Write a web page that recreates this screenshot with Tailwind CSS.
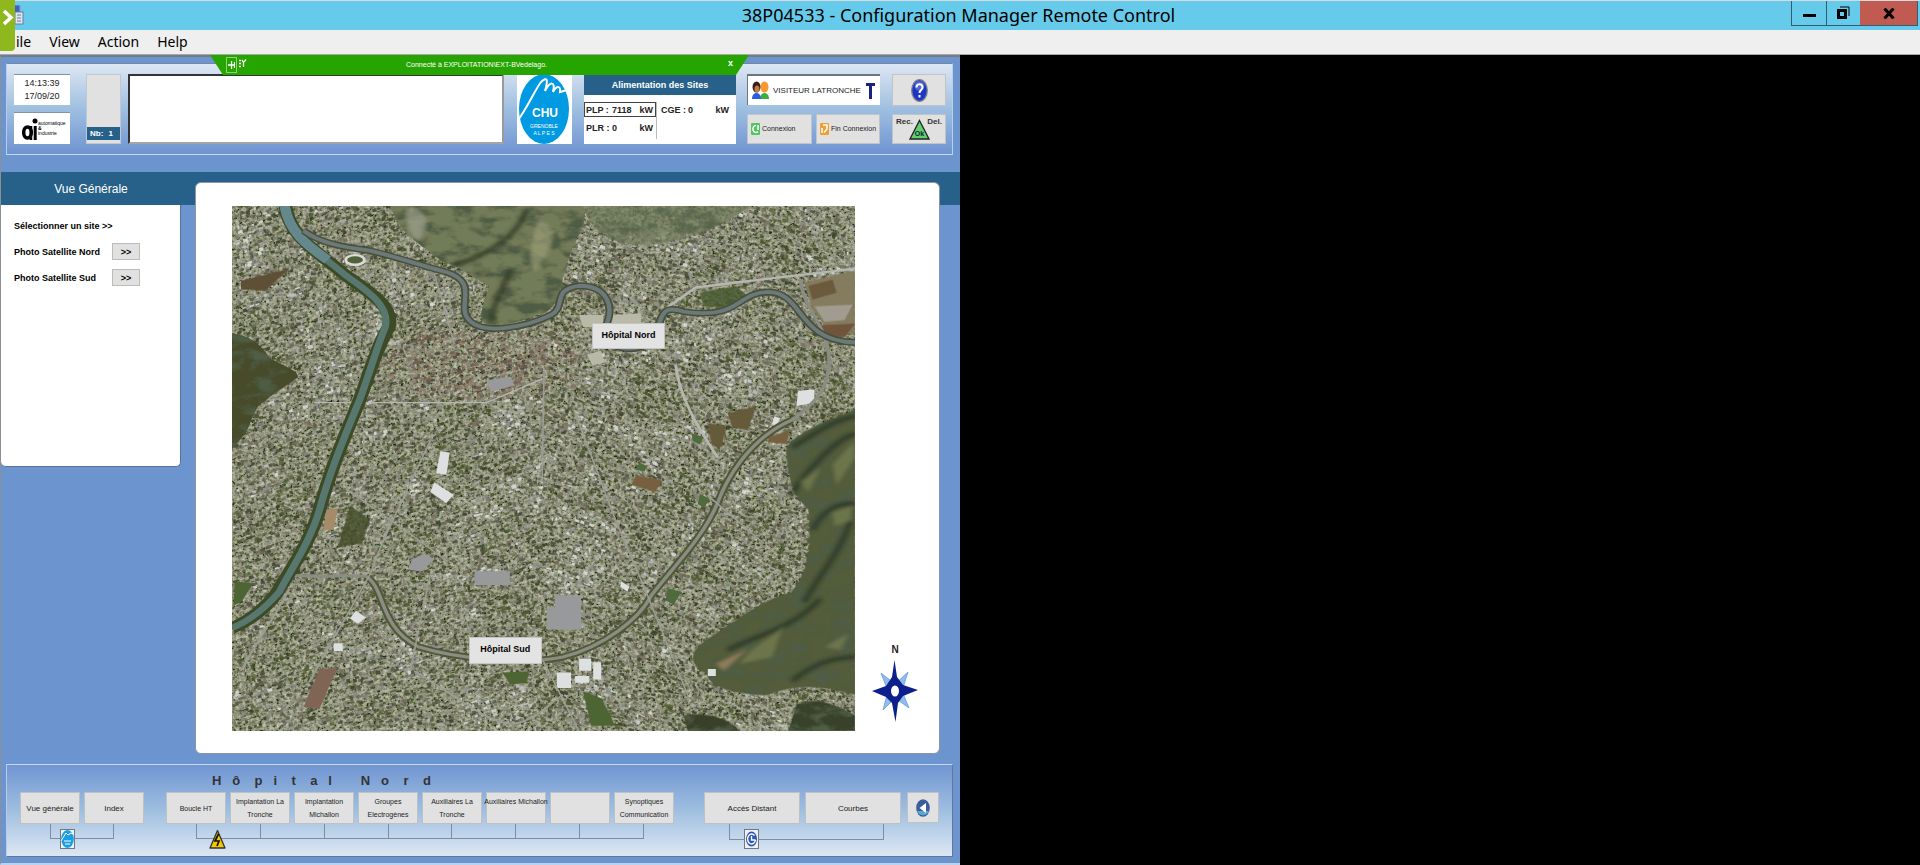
<!DOCTYPE html>
<html lang="fr">
<head>
    <meta charset="UTF-8">
    <meta name="viewport" content="width=device-width, initial-scale=1">
    <title>38P04533 - Configuration Manager Remote Control</title>
    <script src="https://cdn.jsdelivr.net/npm/@tailwindcss/browser@4"></script>
</head>
<body class="min-h-screen flex flex-col bg-black text-black font-['Liberation_Sans',sans-serif]">

    <!-- Title bar -->
    <header class="relative flex h-[30px] border-t border-[#d5dbde] bg-[#66cbea] font-['Noto_Sans','Open_Sans',sans-serif]">
        <svg class="absolute left-[12px] top-[4px] w-[12px] h-[20px]" viewBox="0 0 12 20">
            <rect x="1" y="0" width="7" height="13" fill="#3c62c8" stroke="#8c9cc0"/>
            <rect x="3" y="7" width="8" height="12" fill="#dfe6f2" stroke="#6c7896"/>
            <path d="M5 10h4M5 13h4M5 16h4" stroke="#6c7896"/>
        </svg>
        <h1 class="flex-1 text-center text-[18px] leading-[29px] pl-[126px]">38P04533 - Configuration Manager Remote Control</h1>
        <div class="flex h-[25px] mr-[2px] border border-t-0 border-[#2d5f70]">
            <button class="w-[35px] flex items-center justify-center border-r border-[#2d5f70]" aria-label="Minimize">
                <svg class="w-[13px] h-[12px]" viewBox="0 0 13 12"><path d="M0 8.500h13" stroke="#000" stroke-width="3"/></svg>
            </button>
            <button class="w-[33px] flex items-center justify-center" aria-label="Restore">
                <svg class="w-[13px] h-[14px]" viewBox="0 0 13 14" fill="none" stroke="#000"><rect x="1.500" y="4.500" width="7" height="7" stroke-width="3"/><path d="M3 1h9v9" stroke-width="1"/></svg>
            </button>
            <button class="w-[57px] flex items-center justify-center bg-[#c15a50]" aria-label="Close">
                <svg class="w-[12px] h-[11px]" viewBox="0 0 12 11"><path d="M1.500 0.500l9 10M10.500 0.500l-9 10" stroke="#000" stroke-width="3"/></svg>
            </button>
        </div>
        <button class="absolute z-20 left-0 top-[-1px] w-[15px] h-[51px] rounded-br-sm bg-[#8fb81e]" aria-label="Expand">
            <svg class="absolute left-[2px] top-[9px] w-[12px] h-[17px]" viewBox="0 0 12 17"><path d="M2 2l7 6.500l-7 6.500" fill="none" stroke="#fff" stroke-width="3.500"/></svg>
        </button>
    </header>

    <!-- Menu -->
    <nav class="flex h-[25px] items-center gap-[18px] pl-[16px] pb-[1px] bg-[#efefef] border-b border-[#a8a8a8] text-[14px] leading-[22px] font-['Noto_Sans','Open_Sans',sans-serif]">
        <button>ile</button>
        <button>View</button>
        <button>Action</button>
        <button>Help</button>
    </nav>

    <div class="flex-1 grid grid-cols-2">
        <div class="relative flex flex-col bg-[#6c95d0] border-l border-t-2 border-b-2 border-l-[#8a8f98] border-t-[#777c84] border-b-[#b9d3ee]">

            <!-- Connection banner -->
            <div class="absolute z-10 left-[209px] right-[211px] top-[-2px] h-[20px] flex items-center px-[16px] bg-[#26a500] text-white [clip-path:polygon(0_0,100%_0,calc(100%-13px)_100%,13px_100%)]">
                <button class="w-[11px] h-[16px] border border-[#8fd27c] flex items-center justify-center" aria-label="Pin">
                    <svg class="w-[7px] h-[10px]" viewBox="0 0 7 10" stroke="#fff" fill="none"><path d="M0 5h3M3.500 1v8M3 5h4M6.500 2v6" stroke-width="1.300"/></svg>
                </button>
                <svg class="ml-[2px] mb-[4px] w-[8px] h-[9px]" viewBox="0 0 8 9" stroke="#fff" fill="none"><path d="M0 1.500h2M0 4.500h2M0 7.500h2M3 1l1.500 2.500L7 0.500M4.500 3v5" stroke-width="1.300"/></svg>
                <p class="flex-1 text-center text-[7px] pr-[22px]">Connecté à EXPLOITATION\EXT-BVedelago.</p>
                <button class="text-[9px] leading-[14px] pb-[5px] font-bold">x</button>
            </div>

            <!-- Top panel -->
            <section class="flex h-[92px] mt-[6px] ml-[5px] mr-[7px] pt-[10px] pl-[7px] pr-[6px] border border-t-[#73889f] border-l-[#b9cdea] border-r-[#b9d0ee] border-b-[#c5daf2] bg-linear-to-b from-[#dde7f3] via-[#9fbfe0] to-[#6f93d1]">
                <div class="w-[56px] flex flex-col justify-between h-[70px] text-[9px] leading-[13px] text-center">
                    <div class="bg-white h-[31px] pt-[2px] border-t border-[#8292a8] text-[#222]">14:13:39<br>17/09/20</div>
                    <div class="bg-white h-[32px] border-t border-[#8292a8] flex items-center pl-[8px]">
                        <svg class="w-[16px] h-[24px] shrink-0" viewBox="0 0 16 24"><ellipse cx="5.500" cy="15.500" rx="3.800" ry="5.500" fill="none" stroke="#000" stroke-width="3.500"/><path d="M9 9v14" fill="none" stroke="#000" stroke-width="2.500"/><path d="M13.200 9v14" stroke="#000" stroke-width="3"/><circle cx="13" cy="4" r="2.500"/></svg>
                        <p class="text-[5px] leading-[5px] text-left">automatique<br><b>&amp;</b><br>industrie</p>
                    </div>
                </div>
                <div class="ml-[16px] w-[35px] h-[70px] pb-[3px] flex flex-col justify-end bg-[#e1e1e1] border border-[#c2c8d0]">
                    <div class="h-[13px] flex justify-between px-[3px] pr-[7px] bg-[#27618a] text-white text-[8px] leading-[13px] font-bold"><span>Nb:</span><span>1</span></div>
                </div>
                <textarea class="ml-[7px] flex-1 min-w-0 h-[70px] bg-white border-2 border-t-[#333] border-l-[#333] border-r-[#9a9a9a] border-b-[#a5a5a5] resize-none" aria-label="Messages"></textarea>
                <svg class="ml-[13px] w-[55px] h-[70px] bg-white" viewBox="0 0 55 70">
                    <ellipse cx="27" cy="35" rx="25" ry="35" fill="#009ae3"/>
                    <path d="M1 46C10 34 18 16 24 8C31 2 31 6 28 17C33 7 39 7 36 18C40 11 44 12 43 18C46 17 50 17 54 14" fill="none" stroke="#fff" stroke-width="2"/>
                    <text x="28" y="43" text-anchor="middle" font-size="12" font-weight="bold" fill="#fff" font-family="Liberation Sans, sans-serif">CHU</text>
                    <text x="27" y="54" text-anchor="middle" font-size="5" fill="#fff" font-family="Liberation Sans, sans-serif">GRENOBLE</text>
                    <text x="27" y="61" text-anchor="middle" font-size="5" fill="#fff" font-family="Liberation Sans, sans-serif">A L P E S</text>
                </svg>
                <table class="ml-[12px] w-[152px] h-[70px] table-fixed bg-white border-separate border-spacing-0 text-[9px] leading-[12px] font-bold text-[#222]">
                    <colgroup><col class="w-[27px]"><col class="w-[24px]"><col class="w-[21px]"><col class="w-[31px]"><col class="w-[20px]"><col class="w-[29px]"></colgroup>
                    <tr class="h-[21px]"><th colspan="6" class="bg-[#27618a] text-white text-center">Alimentation des Sites</th></tr>
                    <tr class="h-[7px]"><td colspan="6"></td></tr>
                    <tr class="h-[15px]">
                        <td class="border border-r-0 border-[#444] pl-px">PLP :</td><td class="border-y border-[#444] pl-[1px]">7118</td><td class="border border-l-0 border-[#444] text-right pr-[2px]">kW</td>
                        <td class="border-l border-[#bbb] pl-[4px]">CGE :</td><td class="pl-[1px]">0</td><td class="text-right pr-[7px]">kW</td>
                    </tr>
                    <tr class="h-[22px]">
                        <td class="pl-[2px]">PLR :</td><td class="pl-[1px]">0</td><td class="text-right pr-[3px]">kW</td>
                        <td class="border-l border-[#bbb]"></td><td></td><td></td>
                    </tr>
                    <tr><td colspan="6"></td></tr>
                </table>
                <div class="ml-[11px] w-[133px] h-[70px] flex flex-col justify-between">
                    <div class="flex items-center h-[31px] bg-white border-t-2 border-l border-[#6d7682] pl-[4px] pr-[5px]">
                        <svg class="w-[17px] h-[19px]" viewBox="0 0 17 19">
                            <path d="M8 18c0-8 9-8 9 0z" fill="#3fae3c"/><path d="M0 18c0-8 9-8 9 0z" fill="#2a5be0"/>
                            <ellipse cx="12.500" cy="6" rx="4" ry="5.500" fill="#f59a2c"/><ellipse cx="4.500" cy="6" rx="4" ry="5.500" fill="#3b2017"/><ellipse cx="5" cy="8" rx="2.500" ry="3.500" fill="#c47a45"/>
                        </svg>
                        <span class="flex-1 pl-[4px] text-[8px] whitespace-nowrap text-[#222]">VISITEUR LATRONCHE</span>
                        <svg class="w-[9px] h-[16px]" viewBox="0 0 9 16"><path d="M0 1.500h9M4.500 1v15" stroke="#1c2180" stroke-width="3"/></svg>
                    </div>
                    <div class="flex justify-between text-[7px] text-[#222]">
                        <button class="w-[65px] h-[30px] flex items-center gap-[2px] pl-[3px] bg-[#e1e1e1] border border-[#c0c4c8]">
                            <svg class="w-[9px] h-[12px] shrink-0" viewBox="0 0 9 12"><rect width="9" height="12" rx="1" fill="#4fc45f"/><path d="M7 2v5M5 2.500a3 3.500 0 1 0 2 6" fill="none" stroke="#fff" stroke-width="1.500"/></svg>
                            Connexion
                        </button>
                        <button class="w-[64px] h-[30px] flex items-center gap-[2px] pl-[3px] whitespace-nowrap bg-[#e1e1e1] border border-[#c0c4c8]">
                            <svg class="w-[9px] h-[12px] shrink-0" viewBox="0 0 9 12"><rect width="9" height="12" rx="1" fill="#f0a030"/><path d="M3 2h4v4L4 9.500M2 5v5" fill="none" stroke="#fff" stroke-width="1.500"/></svg>
                            Fin Connexion
                        </button>
                    </div>
                </div>
                <div class="ml-[12px] w-[54px] h-[70px] flex flex-col justify-between">
                    <button class="h-[32px] flex items-center justify-center bg-[#e1e1e1] border border-[#c0c4c8]" aria-label="Aide">
                        <svg class="w-[17px] h-[23px]" viewBox="0 0 17 23"><ellipse cx="8.500" cy="11.500" rx="7.800" ry="10.800" fill="#1c35c4" stroke="#7d8390" stroke-width="1.300"/><ellipse cx="8.500" cy="7" rx="5" ry="5" fill="#6f86e6" opacity=".6"/><path d="M5.500 8.500C5.500 4 11.500 4 11.500 8.500C11.500 11 8.500 11 8.500 14M8.500 16v2.500" fill="none" stroke="#fff" stroke-width="2"/></svg>
                    </button>
                    <button class="relative h-[30px] flex justify-between px-[3px] pt-[1px] bg-[#e1e1e1] border border-[#c0c4c8] text-[8px] leading-[12px] font-bold text-[#333]">
                        <span>Rec.</span><span>Del.</span>
                        <svg class="absolute left-[16px] top-[4px] w-[21px] h-[21px]" viewBox="0 0 21 21"><path d="M10.500 1.500L20 20H1z" fill="#5fcf6f" stroke="#222" stroke-width="1.300"/><text x="10.500" y="17" text-anchor="middle" font-size="7" font-family="Liberation Sans, sans-serif" fill="#123">Ok</text></svg>
                    </button>
                </div>
            </section>

            <!-- Main area -->
            <main class="flex-1 mt-[17px] flex bg-[linear-gradient(#27618a_33px,transparent_33px)]">
                <aside class="w-[180px]">
                    <h2 class="h-[33px] text-center text-white text-[12px] leading-[34px]">Vue Générale</h2>
                    <div class="h-[262px] px-[13px] pt-[13px] bg-white border-r border-b border-[#56719b] rounded-b-[5px] text-[9px] leading-[16px] font-bold">
                        <p>Sélectionner un site &gt;&gt;</p>
                        <div class="mt-[9px] flex items-center">
                            <span class="w-[98px]">Photo Satellite Nord</span>
                            <button class="w-[28px] h-[17px] bg-[#e1e1e1] border border-[#bcbcbc] leading-[14px]">&gt;&gt;</button>
                        </div>
                        <div class="mt-[9px] flex items-center">
                            <span class="w-[98px]">Photo Satellite Sud</span>
                            <button class="w-[28px] h-[17px] bg-[#e1e1e1] border border-[#bcbcbc] leading-[14px]">&gt;&gt;</button>
                        </div>
                    </div>
                </aside>
                <div class="flex-1 mt-[10px] mb-[10px] ml-[14px] mr-[20px] pt-[23px] pb-[22px] pl-[36px] flex bg-white border border-[#8b95a5] rounded-[6px]">
                    <div class="relative flex-1">
                        <svg id="map" class="absolute inset-0 w-full h-full" viewBox="7 18 1549 1527" preserveAspectRatio="none">
                            <defs>
                                <filter id="grain" x="0" y="0" width="100%" height="100%">
                                    <feTurbulence type="fractalNoise" baseFrequency="0.12" numOctaves="4" seed="4"/>
                                    <feColorMatrix values="1.700 0 0 0 -.42  1.600 .1 0 0 -.4  1.500 0 .1 0 -.47  0 0 0 0 1"/>
                                </filter>
                                <filter id="relief" x="0" y="0" width="100%" height="100%">
                                    <feTurbulence type="fractalNoise" baseFrequency="0.018 0.03" numOctaves="4" seed="9" result="n"/>
                                    <feColorMatrix values="0 0 0 0 .08  0 0 0 0 .11  0 0 0 0 .06  4 0 0 0 -1.800"/>
                                    <feComposite in2="SourceGraphic" operator="in" result="s"/>
                                    <feMerge><feMergeNode in="SourceGraphic"/><feMergeNode in="s"/></feMerge>
                                </filter>
                                <filter id="soft"><feGaussianBlur stdDeviation="5"/></filter>
                            </defs>
                            <rect x="7" y="18" width="1549" height="1527" fill="#65664f"/>
                            <rect x="7" y="18" width="1549" height="1527" filter="url(#grain)" opacity=".6"/>
                            <g id="blocks"></g>
                            <!-- hills -->
                            <g filter="url(#relief)">
                                <path d="M7 388C50 395 80 420 100 460C130 480 170 495 172 515C140 545 110 560 90 585C60 600 60 640 40 680L7 725Z" fill="#464b2b"/>
                                <path d="M400 18H880C900 60 850 130 840 190C820 240 830 290 790 325C740 345 700 370 640 362C610 350 640 290 645 250C590 215 570 190 530 180C480 130 430 110 400 18Z" fill="#737b58"/>
                                <path d="M880 18H1300C1240 60 1180 110 1060 130C960 140 900 100 880 18Z" fill="#717c5b" opacity=".7"/>
                                <path d="M1556 610V1440C1500 1420 1420 1400 1340 1440C1270 1440 1190 1420 1190 1380C1140 1350 1140 1310 1200 1270C1270 1220 1310 1170 1400 1140C1440 1080 1450 1000 1440 900C1390 850 1390 790 1385 720C1430 660 1500 640 1556 610Z" fill="#525b3b"/>
                                <path d="M1390 1545L1410 1470C1460 1440 1510 1470 1556 1500V1545Z" fill="#39422c"/>
                                <path d="M1130 1500C1180 1490 1230 1500 1270 1545H1140Z" fill="#37402a"/>
                            </g>
                            <g filter="url(#soft)">
                                <path d="M740 30C720 90 670 150 560 190M650 350C660 290 690 240 700 200" stroke="#2d3724" stroke-width="16" fill="none" opacity=".7"/>
                                <path d="M770 60C830 80 800 150 760 210C740 180 750 120 770 60Z" fill="#a1a37c" opacity=".6"/>
                                <path d="M450 20C500 30 500 90 470 120C440 90 430 50 450 20Z" fill="#a3a695" opacity=".6"/>
                                <path d="M1395 860C1430 800 1500 700 1556 680M1450 960C1480 890 1530 880 1556 885M1430 1170C1460 1100 1540 1000 1550 900M1240 1310C1300 1270 1400 1250 1470 1160M1400 1400C1450 1350 1500 1330 1556 1330M1400 720C1440 690 1500 640 1556 630" stroke="#1f2c1e" stroke-width="15" fill="none" opacity=".6"/>
                                <path d="M1500 770L1556 700V750L1510 830ZM1500 910L1550 890V930L1505 950ZM1270 1350C1300 1290 1370 1270 1380 1230L1350 1330ZM1480 1300L1540 1260L1520 1310ZM1420 820L1470 780L1440 850Z" fill="#737c50" opacity=".8"/>
                                <path d="M1210 1350L1290 1305L1230 1370Z" fill="#8f7b5c"/>
                            </g>
                            <!-- fields -->
                            <path d="M1430 240L1556 205V390L1500 395L1450 320Z" fill="#857b5e"/>
                            <path d="M1440 250L1500 232L1510 270L1450 290Z" fill="#6b5a3c"/>
                            <path d="M1455 310L1550 305L1530 350L1480 355Z" fill="#a09c8f"/>
                            <path d="M1465 365L1556 360L1530 400L1490 398Z" fill="#70553a"/>
                            <path d="M1340 690L1395 670L1385 710L1340 705ZM1010 800L1075 815L1060 850L1000 830Z" fill="#766040"/>
                            <path d="M1240 620L1310 600L1290 670L1250 660ZM1190 650L1235 655L1225 720L1200 715Z" fill="#655a3a"/>
                            <path d="M30 235L150 200L90 265L30 260Z" fill="#5e4f36"/>
                            <path d="M300 890L350 930L330 1000L270 1010Z" fill="#414b27" opacity=".8"/>
                            <path d="M240 900h30l-10 60h-25z" fill="#a58b68"/>
                            <path d="M225 1365L268 1362L225 1480L185 1475Z" fill="#806555"/>
                            <path d="M1170 270L1260 250L1300 290L1250 315L1180 310Z" fill="#465a30" opacity=".8"/>
                            <path d="M1090 1130L1125 1140L1105 1178L1085 1165ZM1150 680L1180 690L1170 712L1152 700ZM1020 765L1040 775L1032 790L1012 785ZM1170 855L1195 870L1180 895L1165 885Z" fill="#4f6a3c"/>
                            <path d="M880 1430L925 1450L960 1530L900 1530ZM680 1375L745 1372L740 1405L700 1410ZM15 1110L60 1115L30 1170L10 1180Z" fill="#4d6433"/>
                            <!-- big roofs -->
                            <g fill="#dde0e0">
                                <path d="M510 822L558 858L540 882L500 850ZM525 732L548 735L540 800L515 795ZM1415 555L1455 552L1455 590L1410 600ZM1355 630L1370 635L1360 658L1350 652Z"/>
                                <path d="M870 1335h30v35h-30zM815 1375h35v45h-35zM905 1345h20v50h-20zM860 1385h35v20h-35zM1190 1365h20v20h-20zM975 1110l20 15l-5 15l-18-15zM315 1195l25 20l-20 18l-20-15zM260 1290h22v22h-22z"/>
                            </g>
                            <path d="M455 1045L485 1030L510 1045L480 1080L445 1075ZM790 1185h85v65h-85zM810 1150h65v35h-65zM610 1080h88v40h-88zM640 525l60-10l10 25l-60 18z" fill="#98999b"/>
                            <path d="M890 450l35-12l8 35l-30 8zM870 335h60v35h-50zM950 335l75-5v30h-75z" fill="#b9b9a8"/>
                            <ellipse cx="313" cy="175" rx="23" ry="14" fill="#53613a" stroke="#d9ddd8" stroke-width="7"/>
                            <!-- roads -->
                            <g fill="none" stroke="#9c9d95" stroke-width="6">
                                <path d="M340 1095C390 1130 370 1240 470 1300C580 1340 750 1350 830 1330C930 1300 1020 1220 1050 1150C1110 1060 1180 980 1215 880C1240 800 1300 690 1400 640" stroke="#4f5838" stroke-width="20"/>
                                <path d="M130 1090C200 1100 300 1090 340 1095C390 1130 370 1240 470 1300C580 1340 750 1350 830 1330C930 1300 1020 1220 1050 1150C1110 1060 1180 980 1215 880C1240 800 1300 690 1400 640C1460 590 1500 540 1490 440C1480 360 1420 300 1422 230" stroke="#8b8c82" stroke-width="9"/>
                                <path d="M1110 480C1120 580 1170 670 1215 750M1080 320L1160 255L1300 235L1556 200" stroke="#b5b7b0" stroke-width="7"/>
                                <path d="M210 590H640L780 520" stroke="#b5b7b0" stroke-width="4"/>
                                <path d="M783 490L778 820M290 840L460 980L540 1050M860 620L960 930L1040 1150L1140 1440M400 940L350 1090L200 1400M500 1090L450 1370M780 1340L870 1545M510 215L560 420M1190 860L1330 1000M500 700L380 1000" stroke-width="4"/>
                                <path d="M460 1370C560 1440 640 1520 700 1525C760 1520 800 1460 830 1440M30 1370C60 1300 110 1220 150 1130" stroke-width="5"/>
                            </g>
                            <!-- rivers -->
                            <g fill="none" stroke-linejoin="round">
                                <path d="M140 18C150 110 220 150 290 220C350 270 410 310 397 370C370 420 350 500 325 580C290 680 250 790 225 900C200 1000 150 1080 115 1150C80 1200 40 1230 7 1245" stroke="#3d4a26" stroke-width="34"/>
                                <path d="M140 18C150 110 220 150 290 220C350 270 400 310 388 370C370 420 350 500 325 580C290 680 250 790 225 900C200 1000 150 1080 125 1140C80 1200 40 1230 7 1245" stroke="#58776e" stroke-width="18"/>
                                <path d="M138 18C148 90 190 130 245 175" stroke="#65888c" stroke-width="26"/>
                                <path id="isere" d="M185 90C230 130 300 140 350 148C430 170 500 200 540 210C620 240 570 300 590 340C620 400 740 370 800 335C840 310 800 260 870 250C940 250 960 310 935 370C930 450 1040 450 1060 390C1080 320 1080 310 1130 325C1270 350 1260 270 1340 268C1430 270 1410 410 1556 415" stroke="#46503c" stroke-width="20"/>
                                <path d="M185 90C230 130 300 140 350 148C430 170 500 200 540 210C620 240 570 300 590 340C620 400 740 370 800 335C840 310 800 260 870 250C940 250 960 310 935 370C930 450 1040 450 1060 390C1080 320 1080 310 1130 325C1270 350 1260 270 1340 268C1430 270 1410 410 1556 415" stroke="#6d7978" stroke-width="11"/>
                            </g>
                        </svg>
                        <button class="absolute left-[57.800%] top-[22.300%] w-[73px] h-[26px] bg-[#e3e3e3] border border-[#c4c4c4] text-[9px] font-bold">Hôpital Nord</button>
                        <button class="absolute left-[38%] top-[82%] w-[73px] h-[27px] bg-[#e3e3e3] border border-[#c4c4c4] text-[9px] font-bold">Hôpital Sud</button>
                    </div>
                    <div class="w-[84px] self-end flex flex-col items-center pb-[9px] pr-[4px]">
                        <span class="text-[10px] leading-[14px] font-bold text-[#222]">N</span>
                        <svg class="mt-[3px] w-[46px] h-[62px]" viewBox="0 0 46 62">
                            <path d="M9 13L23 24L36 12L30 31L37 48L23 38L11 50L16 31Z" fill="#8fbdf0" stroke="#5f8fce" stroke-width=".7"/>
                            <path d="M22.500 0L25 17L31 25L46 30L31 36L26 43L23.500 62L20 43L14 37L0 31L14 26L20 17Z" fill="#0c1f8c"/>
                            <ellipse cx="23" cy="31" rx="4" ry="5.500" fill="#fff"/>
                        </svg>
                    </div>
                </div>
            </main>

            <!-- Bottom navigation -->
            <nav class="relative flex h-[93px] ml-[5px] mr-[7px] mb-[6px] pl-[13px] pr-[13px] pt-[27px] border border-t-[#c5daf2] border-l-[#b9cdea] border-r-[#60789c] border-b-[#60789c] bg-linear-to-b from-[#7195d2] via-[#9fbfe0] to-[#dde7f3] text-[8px] leading-[13px] text-[#222]">
                <div class="relative w-[124px]">
                    <div class="grid grid-cols-2 gap-[4px]">
                        <button class="h-[32px] bg-[#e1e1e1] border border-[#bdc1c6]">Vue générale</button>
                        <button class="h-[32px] bg-[#e1e1e1] border border-[#bdc1c6]">Index</button>
                    </div>
                    <div class="h-[15px] mx-[30px] border border-t-0 border-[#7f8da3]"></div>
                    <svg class="absolute left-[40px] top-[37px] w-[15px] h-[20px]" viewBox="0 0 15 20"><rect x=".5" y=".5" width="14" height="19" fill="#e8f4fc" stroke="#777"/><ellipse cx="7.500" cy="10" rx="6.300" ry="9" fill="#1a9fe4"/><path d="M1 12L6 4L8 6L11 4L13 5M4 12h7M5 15h5" stroke="#fff" fill="none"/></svg>
                </div>
                <div class="relative ml-[22px] flex-1">
                    <h3 class="absolute left-[46px] bottom-[67px] whitespace-pre text-[13px] leading-[16px] font-bold text-[#333]">H   ô    p   i    t    a   l        N   o    r    d</h3>
                    <div class="grid grid-cols-8 gap-[4px] whitespace-nowrap text-[7px]">
                        <button class="h-[32px] bg-[#e1e1e1] border border-[#bdc1c6]">Boucle HT</button>
                        <button class="h-[32px] bg-[#e1e1e1] border border-[#bdc1c6]">Implantation La<br>Tronche</button>
                        <button class="h-[32px] bg-[#e1e1e1] border border-[#bdc1c6]">Implantation<br>Michallon</button>
                        <button class="h-[32px] bg-[#e1e1e1] border border-[#bdc1c6]">Groupes<br>Electrogènes</button>
                        <button class="h-[32px] bg-[#e1e1e1] border border-[#bdc1c6]">Auxiliaires La<br>Tronche</button>
                        <button class="h-[32px] pb-[13px] flex justify-center items-center bg-[#e1e1e1] border border-[#bdc1c6]">Auxiliaires Michallon</button>
                        <button class="h-[32px] bg-[#e1e1e1] border border-[#bdc1c6]" aria-label="Libre"></button>
                        <button class="h-[32px] bg-[#e1e1e1] border border-[#bdc1c6]">Synoptiques<br>Communication</button>
                    </div>
                    <div class="grid grid-cols-7 h-[15px] mx-[30px] border border-t-0 border-l-0 border-[#7f8da3]">
                        <i class="border-l border-[#7f8da3]"></i><i class="border-l border-[#7f8da3]"></i><i class="border-l border-[#7f8da3]"></i><i class="border-l border-[#7f8da3]"></i><i class="border-l border-[#7f8da3]"></i><i class="border-l border-[#7f8da3]"></i><i class="border-l border-[#7f8da3]"></i>
                    </div>
                    <svg class="absolute left-[43px] top-[37px] w-[17px] h-[20px]" viewBox="0 0 17 20"><path d="M8.500 1.500L16 19H1Z" fill="#f7c600" stroke="#333" stroke-width="1.300" stroke-linejoin="round"/><path d="M9.500 5L6 12h4l-2 5" fill="none" stroke="#111" stroke-width="1.700"/></svg>
                </div>
                <div class="relative ml-[30px] w-[197px]">
                    <div class="grid grid-cols-2 gap-[5px]">
                        <button class="h-[32px] bg-[#e1e1e1] border border-[#bdc1c6]">Accès Distant</button>
                        <button class="h-[32px] bg-[#e1e1e1] border border-[#bdc1c6]">Courbes</button>
                    </div>
                    <div class="h-[16px] ml-[25px] mr-[17px] border border-t-0 border-[#7f8da3]"></div>
                    <svg class="absolute left-[40px] top-[37px] w-[15px] h-[20px]" viewBox="0 0 15 20"><rect x=".5" y=".5" width="14" height="19" fill="#eef1f6" stroke="#777"/><ellipse cx="7.500" cy="10" rx="5.500" ry="7.500" fill="#2d55b8"/><path d="M10.500 6.500A4 5 0 1 0 11.500 11M7.500 7v4h4" stroke="#fff" fill="none" stroke-width="1.400"/></svg>
                </div>
                <button class="ml-[6px] w-[32px] h-[31px] flex items-center justify-center bg-[#e1e1e1] border border-[#bdc1c6]" aria-label="Retour">
                    <svg class="w-[14px] h-[18px]" viewBox="0 0 14 18"><ellipse cx="7" cy="9" rx="6.800" ry="8.800" fill="#3c5c9c"/><path d="M1 12a6.500 7 0 0 0 12 0z" fill="#5aa6cf"/><path d="M10 4v10L3.500 9z" fill="#fff"/></svg>
                </button>
            </nav>
        </div>
        <div class="bg-black"></div>
    </div>

    <script>
        // Scatter buildings and trees over the town
        let seed = 7;
        function rand() {
            seed = (seed * 16807) % 2147483647;
            return seed / 2147483647;
        }

        // Coarse value noise, so parks and built-up blocks form clusters
        const grid = Array.from({ length: 1600 }, rand);
        function noise(x, y, size) {
            const gx = Math.floor(x / size), gy = Math.floor(y / size);
            const fx = x / size - gx, fy = y / size - gy;
            const at = (i, j) => grid[((i % 40) + (j % 40) * 40)];
            return (at(gx, gy) * (1 - fx) + at(gx + 1, gy) * fx) * (1 - fy)
                + (at(gx, gy + 1) * (1 - fx) + at(gx + 1, gy + 1) * fx) * fy;
        }

        const green = ["#3e4727", "#4c5a2f", "#56613c", "#5e6440", "#333c24", "#6d6d50", "#8b8c84"];
        const town = ["#4a4d3a", "#5d5b4c", "#7a7868", "#8b8c84", "#a6a7a3", "#746c5a", "#3e4330"];
        const works = ["#a6a7a3", "#c3c5c3", "#e0e2e2", "#8e9090", "#6f7068", "#565a45"];
        const old = ["#6b5a4e", "#85705f", "#5c5046", "#8f8780", "#48433a", "#957967"];
        const paths = {};

        for (let i = 0; i < 24000; i++) {
            const x = 7 + rand() * 1540;
            const y = 18 + rand() * 1518;
            const n = noise(x, y, 60) * 0.6 + noise(x + 300, y + 200, 26) * 0.4 + (rand() - 0.5) * 0.25;
            const inOld = Math.hypot((x - 620) / 290, (y - 470) / 130) < 0.6 + rand() * 0.4;
            const list = inOld ? old : n < 0.42 ? green : n < 0.68 ? town : works;
            const color = list[Math.floor(rand() * list.length)];
            const w = 3 + rand() * 9;
            const h = 3 + rand() * 7;
            // streets lean differently east and west of the centre
            const s = (x < 780 ? -0.35 : 0.4) * w;
            paths[color] = (paths[color] || "") + `M${x.toFixed(1)} ${y.toFixed(1)}l${w.toFixed(1)} ${s.toFixed(1)}l${(-s / 2).toFixed(1)} ${h.toFixed(1)}l${(-w).toFixed(1)} ${(-s).toFixed(1)}z`;
        }

        document.getElementById("blocks").innerHTML = Object.entries(paths)
            .map(([color, d]) => `<path d="${d}" fill="${color}" opacity=".8"/>`)
            .join("");
    </script>
</body>
</html>
